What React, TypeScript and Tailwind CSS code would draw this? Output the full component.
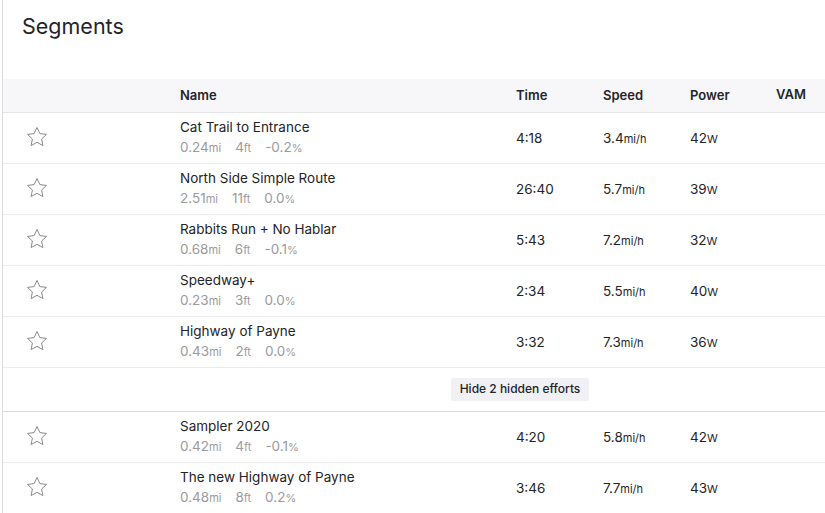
import React from 'react';

type Segment = {
  name: string;
  dist: string;
  elev: string;
  grade: string;
  time: string;
  speed: string;
  power: string;
};

const visible: Segment[] = [
  { name: 'Cat Trail to Entrance', dist: '0.24', elev: '4', grade: '-0.2', time: '4:18', speed: '3.4', power: '42' },
  { name: 'North Side Simple Route', dist: '2.51', elev: '11', grade: '0.0', time: '26:40', speed: '5.7', power: '39' },
  { name: 'Rabbits Run + No Hablar', dist: '0.68', elev: '6', grade: '-0.1', time: '5:43', speed: '7.2', power: '32' },
  { name: 'Speedway+', dist: '0.23', elev: '3', grade: '0.0', time: '2:34', speed: '5.5', power: '40' },
  { name: 'Highway of Payne', dist: '0.43', elev: '2', grade: '0.0', time: '3:32', speed: '7.3', power: '36' },
];

const hidden: Segment[] = [
  { name: 'Sampler 2020', dist: '0.42', elev: '4', grade: '-0.1', time: '4:20', speed: '5.8', power: '42' },
  { name: 'The new Highway of Payne', dist: '0.48', elev: '8', grade: '0.2', time: '3:46', speed: '7.7', power: '43' },
];

const cols = 'grid grid-cols-[177px_336px_87px_87px_86px_1fr]';

const Star = () => (
  <svg width="24" height="24" viewBox="0 0 24 24" fill="none" stroke="#8a8a8f" strokeWidth={1} strokeLinejoin="round">
    <path d="M12 2.5l2.9 6.1 6.6.8-4.9 4.6 1.3 6.6L12 17.3l-5.9 3.3 1.3-6.6-4.9-4.6 6.6-.8z" />
  </svg>
);

const Row = ({ s }: { s: Segment }) => (
  <div className={`${cols} h-[51px] items-center border-b border-[#ececef] text-[13.5px] text-[#242428]`}>
    <div className="pl-[22px] -mt-[3px]">
      <Star />
    </div>
    <div className="flex flex-col leading-[20px] -mt-[2px]">
      <span>{s.name}</span>
      <span className="text-[#9a9aa0] flex gap-[14px]">
        <span>{s.dist}<span className="text-[11px]">mi</span></span>
        <span>{s.elev}<span className="text-[11px]">ft</span></span>
        <span>{s.grade}<span className="text-[11px]">%</span></span>
      </span>
    </div>
    <div>{s.time}</div>
    <div>{s.speed}<span className="text-[11px]">mi/h</span></div>
    <div>{s.power}<span className="text-[11px]">W</span></div>
    <div />
  </div>
);

export default function App() {
  return (
    <div className="min-h-screen w-full bg-white" style={{ fontFamily: 'Inter, "Noto Sans", sans-serif' }}>
      <div className="ml-[2px] border-l border-[#dcdce0] h-[513px] overflow-hidden">
        <div className="pl-[19px] pt-[11px] h-[79px]">
          <h2 className="text-[21.5px] text-[#242428] leading-[30px]">Segments</h2>
        </div>

        <div className={`${cols} h-[34px] items-center bg-[#f7f7fa] border-b border-[#e3e3e8] text-[13px] font-semibold text-[#242428]`}>
          <div />
          <div>Name</div>
          <div>Time</div>
          <div>Speed</div>
          <div>Power</div>
          <div className="-mt-[2px]">VAM</div>
        </div>

        {visible.map(s => <Row key={s.name} s={s} />)}

        <div className="h-[44px] flex items-center pl-[448px] border-b border-[#dcdce0]">
          <button className="h-[23px] w-[138px] rounded-[3px] bg-[#f0f0f5] text-[12px] font-medium text-[#242428] -mt-[1px]">
            Hide 2 hidden efforts
          </button>
        </div>

        {hidden.map(s => <Row key={s.name} s={s} />)}
      </div>
    </div>
  );
}
